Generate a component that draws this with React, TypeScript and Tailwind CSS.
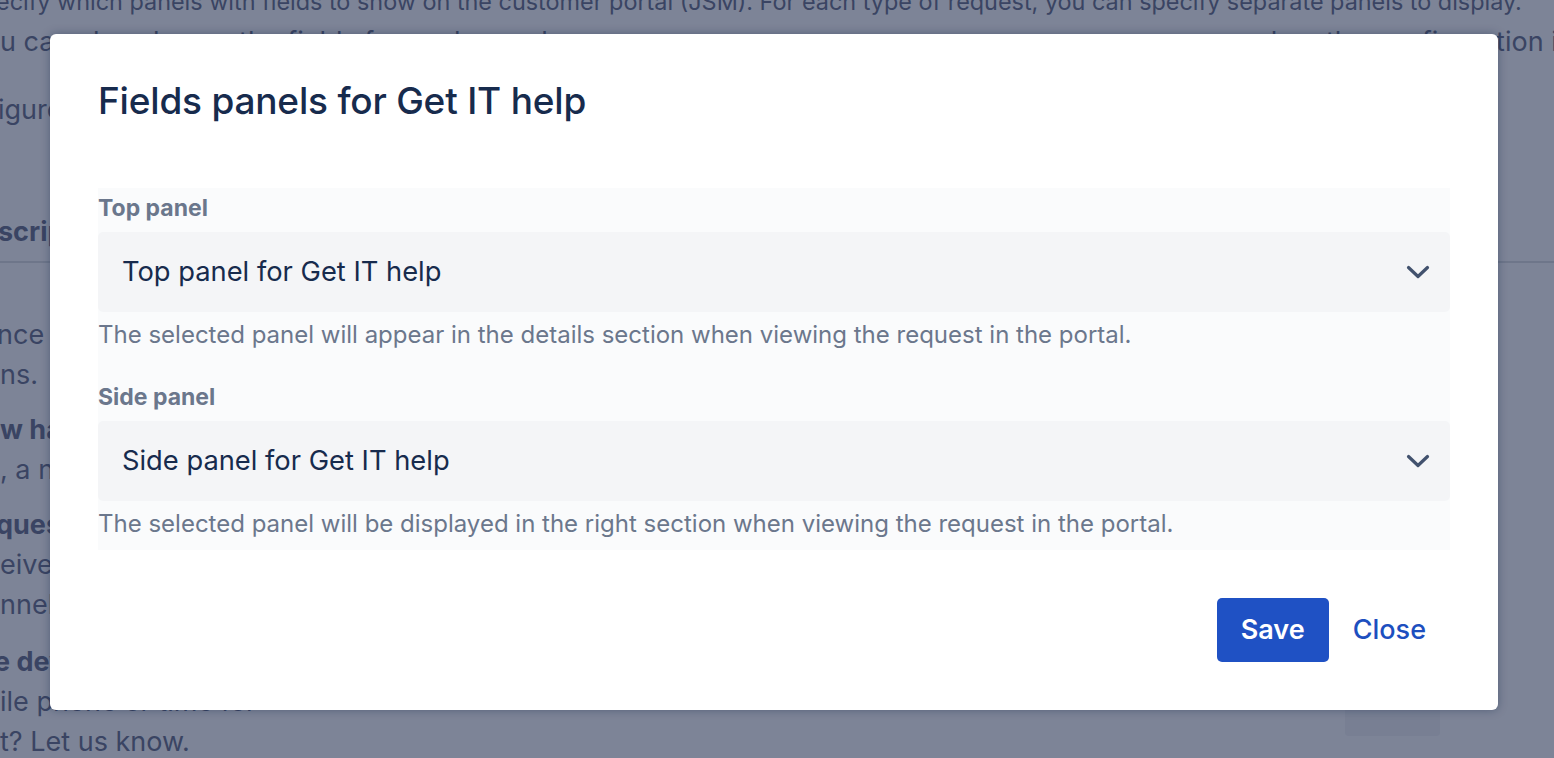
const fieldPanels = [
  {
    label: "Top panel",
    value: "Top panel for Get IT help",
    help: "The selected panel will appear in the details section when viewing the request in the portal.",
  },
  {
    label: "Side panel",
    value: "Side panel for Get IT help",
    help: "The selected panel will be displayed in the right section when viewing the request in the portal.",
  },
];

const ChevronDown = () => (
  <svg width="24" height="24" viewBox="0 0 24 24" fill="none">
    <path d="M2.5 7.5L12 16.5l9.5-9" stroke="#42526e" strokeWidth="3.2" strokeLinecap="round" strokeLinejoin="round" />
  </svg>
);

// Page behind the dimmed overlay: only slivers of it show around the modal
const BackgroundPage = () => (
  <div className="text-[27px] leading-[40px] text-[#3a4463] whitespace-nowrap">
    <div className="-mt-[18px] -ml-[4px] text-[23.4px]">
      ecify which panels with fields to show on the customer portal (JSM). For each type of request, you can specify separate panels to display.
    </div>
    <div className="flex w-[1572px] justify-between">
      <span>u can also choose the fields for each panel</span>
      <span>when the configuration is</span>
    </div>
    <div className="mt-[28px] -ml-[2px]">igure the panels in the project settings</div>
    <div className="mt-[82px] border-b-2 border-[#6e768a] pb-[9px]">
      <span className="font-bold -ml-[2px]">scription</span>
    </div>
    <div className="mt-[52px] -ml-[3px]">nce f or every request type in the portal</div>
    <div>ns.</div>
    <div className="mt-[15px] font-bold">w have the panels changed?</div>
    <div>, a new layout is applied</div>
    <div className="mt-[15px] font-bold -ml-[4px]">quests</div>
    <div>eived from the portal</div>
    <div>nnels are shown</div>
    <div className="mt-[17px] font-bold -ml-[6px]">e devices</div>
    <div>ile phone or time for</div>
    <div>t? Let us know.</div>
  </div>
);

export default function App() {
  return (
    <div className="relative h-[758px] w-[1554px] overflow-hidden bg-[#7d8497] font-['Inter',sans-serif]">
      <BackgroundPage />

      {/* Floating button behind the overlay */}
      <div className="absolute left-[1345px] top-[690px] h-[46px] w-[95px] rounded-[4px] bg-[#787f93]" />

      {/* Modal */}
      <div className="absolute left-[50px] top-[34px] w-[1448px] rounded-[6px] bg-white px-[48px] pt-[45px] pb-[48px] shadow-[0_0_10px_rgba(9,30,66,0.35)]">
        <h1 className="text-[37px] leading-[44px] font-medium tracking-[-0.2px] text-[#172b4d]">
          Fields panels for Get IT help
        </h1>

        <div className="mt-[65px] bg-[#fafbfc] pt-[8px] pb-[12px]">
          {fieldPanels.map((panel, index) => (
            <div key={panel.label} className={index > 0 ? "mt-[36px]" : ""}>
              <div className="text-[23px] leading-[24px] font-bold text-[#6b778c]">{panel.label}</div>
              <div className="mt-[12px] flex h-[80px] items-center justify-between rounded-[5px] bg-[#f4f5f7] pl-[24px] pr-[20px]">
                <span className="text-[27.3px] text-[#172b4d]">{panel.value}</span>
                <ChevronDown />
              </div>
              <div className="mt-[9px] text-[24px] leading-[28px] text-[#6b778c]">{panel.help}</div>
            </div>
          ))}
        </div>

        <div className="mt-[48px] flex justify-end">
          <button className="h-[64px] rounded-[5px] bg-[#1f51c4] px-6 text-[27px] font-semibold text-white">
            Save
          </button>
          <button className="h-[64px] px-6 text-[27px] font-medium text-[#1d4fbf]">Close</button>
        </div>
      </div>
    </div>
  );
}
